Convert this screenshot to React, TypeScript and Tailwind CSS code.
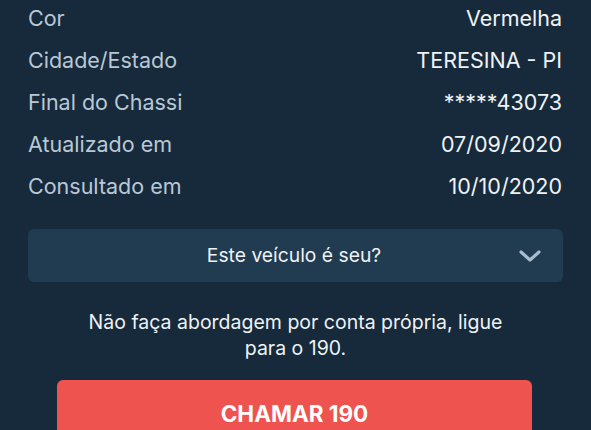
const linhas = [
  { rotulo: "Cor", valor: "Vermelha" },
  { rotulo: "Cidade/Estado", valor: "TERESINA - PI" },
  { rotulo: "Final do Chassi", valor: "*****43073" },
  { rotulo: "Atualizado em", valor: "07/09/2020" },
  { rotulo: "Consultado em", valor: "10/10/2020" },
]

export default function App() {
  return (
    <div
      className="h-[430px] w-[591px] overflow-hidden bg-[#172a3b]"
      style={{ fontFamily: "Inter, 'Noto Sans', sans-serif" }}
    >
      <div className="-mt-[3px] px-[28px] pr-[29px]">
        {linhas.map((l) => (
          <div key={l.rotulo} className="flex h-[42px] items-center justify-between text-[21.5px]">
            <span className="text-[#b9c8d6]">{l.rotulo}</span>
            <span className="text-[#eef2f5]">{l.valor}</span>
          </div>
        ))}
      </div>

      <div className="mx-[28px] mt-[22px] flex h-[53px] items-center rounded-md bg-[#213b51] pl-4 pr-[21px]">
        <span className="flex-1 pl-[26px] text-center text-[19.3px] text-[#eef2f5]">Este veículo é seu?</span>
        <svg width="24" height="14" viewBox="0 0 24 14" fill="none" className="text-[#a9bccd]">
          <polyline points="3,3 12,11 21,3" stroke="currentColor" strokeWidth="3.2" strokeLinecap="round" strokeLinejoin="round" />
        </svg>
      </div>

      <p className="mx-auto mt-[27px] w-[450px] text-center text-[19.5px] leading-[26px] text-[#eef2f5]">
        Não faça abordagem por conta própria, ligue para o 190.
      </p>

      <button
        type="button"
        className="mx-[57px] mt-[19px] flex h-[64px] w-[475px] items-start justify-center rounded-md bg-[#ef5350] pt-[17px] text-[22.5px] font-bold text-white"
      >
        CHAMAR 190
      </button>
    </div>
  )
}
